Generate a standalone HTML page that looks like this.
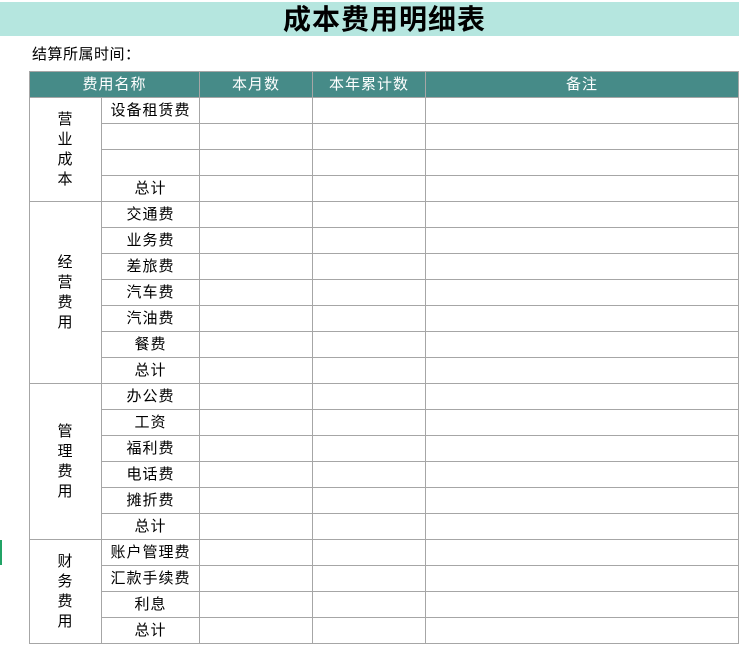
<!DOCTYPE html>
<html><head><meta charset="utf-8"><style>
body{margin:0;width:743px;height:648px;overflow:hidden;background:#fff;font-family:"Liberation Sans","Noto Sans CJK SC",sans-serif;position:relative}
.band{position:absolute;left:0;top:2px;width:739px;height:34px;background:#b5e6df}
.title{position:absolute;left:283px;top:3px;font-size:28px;font-weight:bold;line-height:34px;color:#000;letter-spacing:1px}
.sub{position:absolute;left:32px;top:45px;font-size:15px;line-height:20px;letter-spacing:0.5px}
table{position:absolute;left:29px;top:71px;border-collapse:collapse;table-layout:fixed;font-size:15px;letter-spacing:1px}
td{border:1px solid #a6a6a6;height:24px;padding:1px 0 0 0;text-align:center;line-height:24px;color:#000;overflow:hidden;white-space:nowrap}
tr.h td{background:#468b88;color:#fff}
td.g{line-height:20px;white-space:normal}
.mark{position:absolute;left:0;top:540px;width:2px;height:25px;background:#21a366}
</style></head><body>
<div class="band"></div>
<div class="title">成本费用明细表</div>
<div class="sub">结算所属时间：</div>
<div class="mark"></div>
<table>
<colgroup><col style="width:72px"><col style="width:98px"><col style="width:113px"><col style="width:113px"><col style="width:313px"></colgroup>
<tr class="h"><td colspan="2">费用名称</td><td>本月数</td><td>本年累计数</td><td>备注</td></tr>
<tr><td class="g" rowspan="4">营<br>业<br>成<br>本</td><td>设备租赁费</td><td></td><td></td><td></td></tr>
<tr><td></td><td></td><td></td><td></td></tr>
<tr><td></td><td></td><td></td><td></td></tr>
<tr><td>总计</td><td></td><td></td><td></td></tr>
<tr><td class="g" rowspan="7">经<br>营<br>费<br>用</td><td>交通费</td><td></td><td></td><td></td></tr>
<tr><td>业务费</td><td></td><td></td><td></td></tr>
<tr><td>差旅费</td><td></td><td></td><td></td></tr>
<tr><td>汽车费</td><td></td><td></td><td></td></tr>
<tr><td>汽油费</td><td></td><td></td><td></td></tr>
<tr><td>餐费</td><td></td><td></td><td></td></tr>
<tr><td>总计</td><td></td><td></td><td></td></tr>
<tr><td class="g" rowspan="6">管<br>理<br>费<br>用</td><td>办公费</td><td></td><td></td><td></td></tr>
<tr><td>工资</td><td></td><td></td><td></td></tr>
<tr><td>福利费</td><td></td><td></td><td></td></tr>
<tr><td>电话费</td><td></td><td></td><td></td></tr>
<tr><td>摊折费</td><td></td><td></td><td></td></tr>
<tr><td>总计</td><td></td><td></td><td></td></tr>
<tr><td class="g" rowspan="4">财<br>务<br>费<br>用</td><td>账户管理费</td><td></td><td></td><td></td></tr>
<tr><td>汇款手续费</td><td></td><td></td><td></td></tr>
<tr><td>利息</td><td></td><td></td><td></td></tr>
<tr><td>总计</td><td></td><td></td><td></td></tr>
</table>
</body></html>
